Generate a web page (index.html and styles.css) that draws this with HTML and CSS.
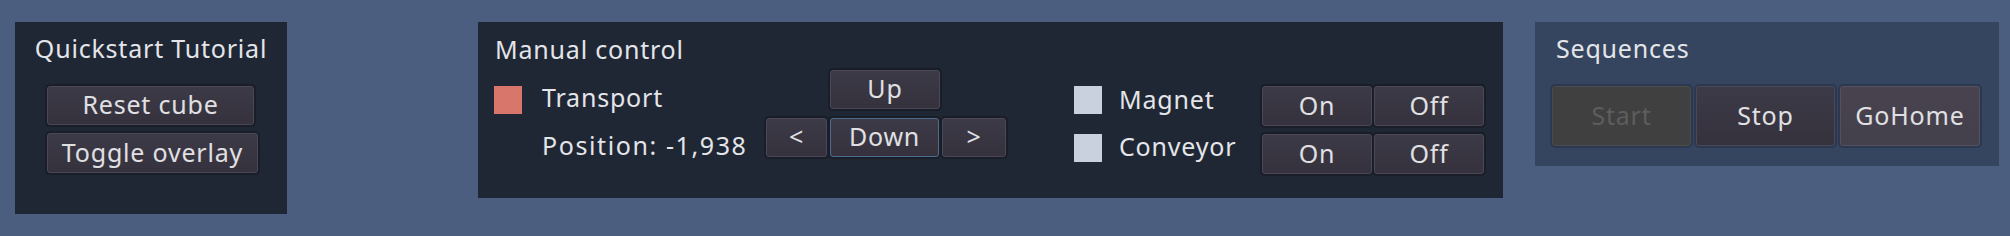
FILE: index.html
```html
<!DOCTYPE html>
<html>
<head>
<meta charset="utf-8">
<link rel="stylesheet" href="styles.css">
</head>
<body>
<div class="row">
  <section class="panel panel-tutorial">
    <div class="title center">Quickstart Tutorial</div>
    <div class="stack">
      <button class="btn w-reset">Reset cube</button>
      <button class="btn w-toggle">Toggle overlay</button>
    </div>
  </section>

  <section class="panel panel-manual">
    <div class="title">Manual control</div>
    <div class="manual-body">
      <div class="col-transport">
        <div class="trow">
          <span class="swatch red"></span>
          <span class="label tlabel">Transport</span>
        </div>
        <div class="label pos">Position: -1,938</div>
      </div>
      <div class="col-dpad">
        <div class="up-row"><button class="btn w-up">Up</button></div>
        <div class="down-row">
          <button class="btn w-left">&lt;</button>
          <button class="btn w-down focus">Down</button>
          <button class="btn w-right">&gt;</button>
        </div>
      </div>
      <div class="col-toggles">
        <div class="toggle-row">
          <span class="swatch grey"></span>
          <span class="label tg-label">Magnet</span>
          <button class="btn w-onoff">On</button>
          <button class="btn w-onoff">Off</button>
        </div>
        <div class="toggle-row">
          <span class="swatch grey"></span>
          <span class="label tg-label second">Conveyor</span>
          <button class="btn w-onoff">On</button>
          <button class="btn w-onoff">Off</button>
        </div>
      </div>
    </div>
  </section>

  <section class="panel panel-seq">
    <div class="title">Sequences</div>
    <div class="seq-buttons">
      <button class="btn tall disabled w-start">Start</button>
      <button class="btn tall w-stop">Stop</button>
      <button class="btn tall hover w-home">GoHome</button>
    </div>
  </section>
</div>
</body>
</html>
```

FILE: styles.css
```css
html, body {
  margin: 0;
  padding: 0;
}
body {
  width: 2010px;
  height: 236px;
  background: #4b5e80;
  font-family: "Noto Sans", "Open Sans", sans-serif;
  font-size: 25px;
  line-height: 34px;
  letter-spacing: 0.8px;
  color: #e4e5e9;
  overflow: hidden;
}
.row {
  display: flex;
  align-items: flex-start;
  padding-top: 22px;
}
.panel {
  box-sizing: border-box;
  flex: none;
}
.panel-tutorial {
  margin-left: 15px;
  width: 272px;
  height: 192px;
  background: #1f2735;
  padding: 9px 0 0 32px;
}
.panel-manual {
  margin-left: 191px;
  width: 1025px;
  height: 176px;
  background: #1f2735;
  padding: 10px 0 0 16px;
}
.panel-seq {
  margin-left: 32px;
  width: 464px;
  height: 144px;
  background: #36455f;
  padding: 9px 0 0 17px;
}
.title {
  height: 34px;
  white-space: nowrap;
}
.title.center {
  margin-left: -32px;
  text-align: center;
}
.panel-manual .title { margin-left: 1px; }
.panel-seq .title { margin-left: 4px; }

.btn {
  box-sizing: border-box;
  font: inherit;
  letter-spacing: inherit;
  color: #e0e0e3;
  background: linear-gradient(#3d3a47, #35323e);
  border: 1px solid #4a4756;
  border-radius: 3px;
  box-shadow: 0 0 0 2px #1a1e28;
  height: 39px;
  padding: 0 0 3px 0;
  line-height: 34px;
  text-align: center;
  white-space: nowrap;
  flex: none;
}
.btn.focus { border-color: #4c6d8d; }
.btn.tall { height: 60px; box-shadow: 0 0 0 2px #2c3850; }
.btn.disabled {
  background: #404040;
  border-color: #4b4b4b;
  color: #5d5d5d;
}
.btn.hover {
  background: linear-gradient(#48434f, #433f4b);
  border-color: #55505d;
}

.stack {
  display: flex;
  flex-direction: column;
  align-items: flex-start;
  gap: 8px;
  margin-top: 21px;
}
.w-reset { width: 207px; }
.w-toggle { width: 211px; height: 40px; }

.manual-body {
  display: flex;
  align-items: flex-start;
  margin-top: 4px;
}
.col-transport {
  width: 272px;
  flex: none;
}
.trow {
  display: flex;
  align-items: flex-start;
  gap: 20px;
}
.swatch {
  display: block;
  width: 28px;
  height: 28px;
  flex: none;
}
.swatch.red { background: #d9766c; }
.swatch.grey { background: #c9d0de; }
.trow .swatch { margin-top: 16px; }
.tlabel { margin-top: 10px; }
.label { white-space: nowrap; }
.pos {
  margin-top: 14px;
  padding-left: 48px;
  letter-spacing: 1.6px;
}

.col-dpad {
  width: 240px;
  flex: none;
}
.up-row { padding-left: 64px; }
.w-up { width: 110px; }
.down-row {
  display: flex;
  gap: 3px;
  margin-top: 9px;
}
.w-left { width: 61px; }
.w-down { width: 109px; }
.w-right { width: 64px; }

.col-toggles {
  margin-left: 68px;
  margin-top: 16px;
  display: flex;
  flex-direction: column;
  gap: 8px;
}
.toggle-row {
  display: flex;
  align-items: flex-start;
  height: 40px;
}
.tg-label {
  width: 143px;
  margin-left: 17px;
  margin-top: -4px;
}
.tg-label.second { margin-top: -5px; }
.w-onoff { width: 110px; height: 40px; }
.w-onoff + .w-onoff { margin-left: 2px; }

.seq-buttons {
  display: flex;
  gap: 5px;
  margin-top: 21px;
}
.w-start { width: 139px; }
.w-stop { width: 139px; }
.w-home { width: 140px; }
```
